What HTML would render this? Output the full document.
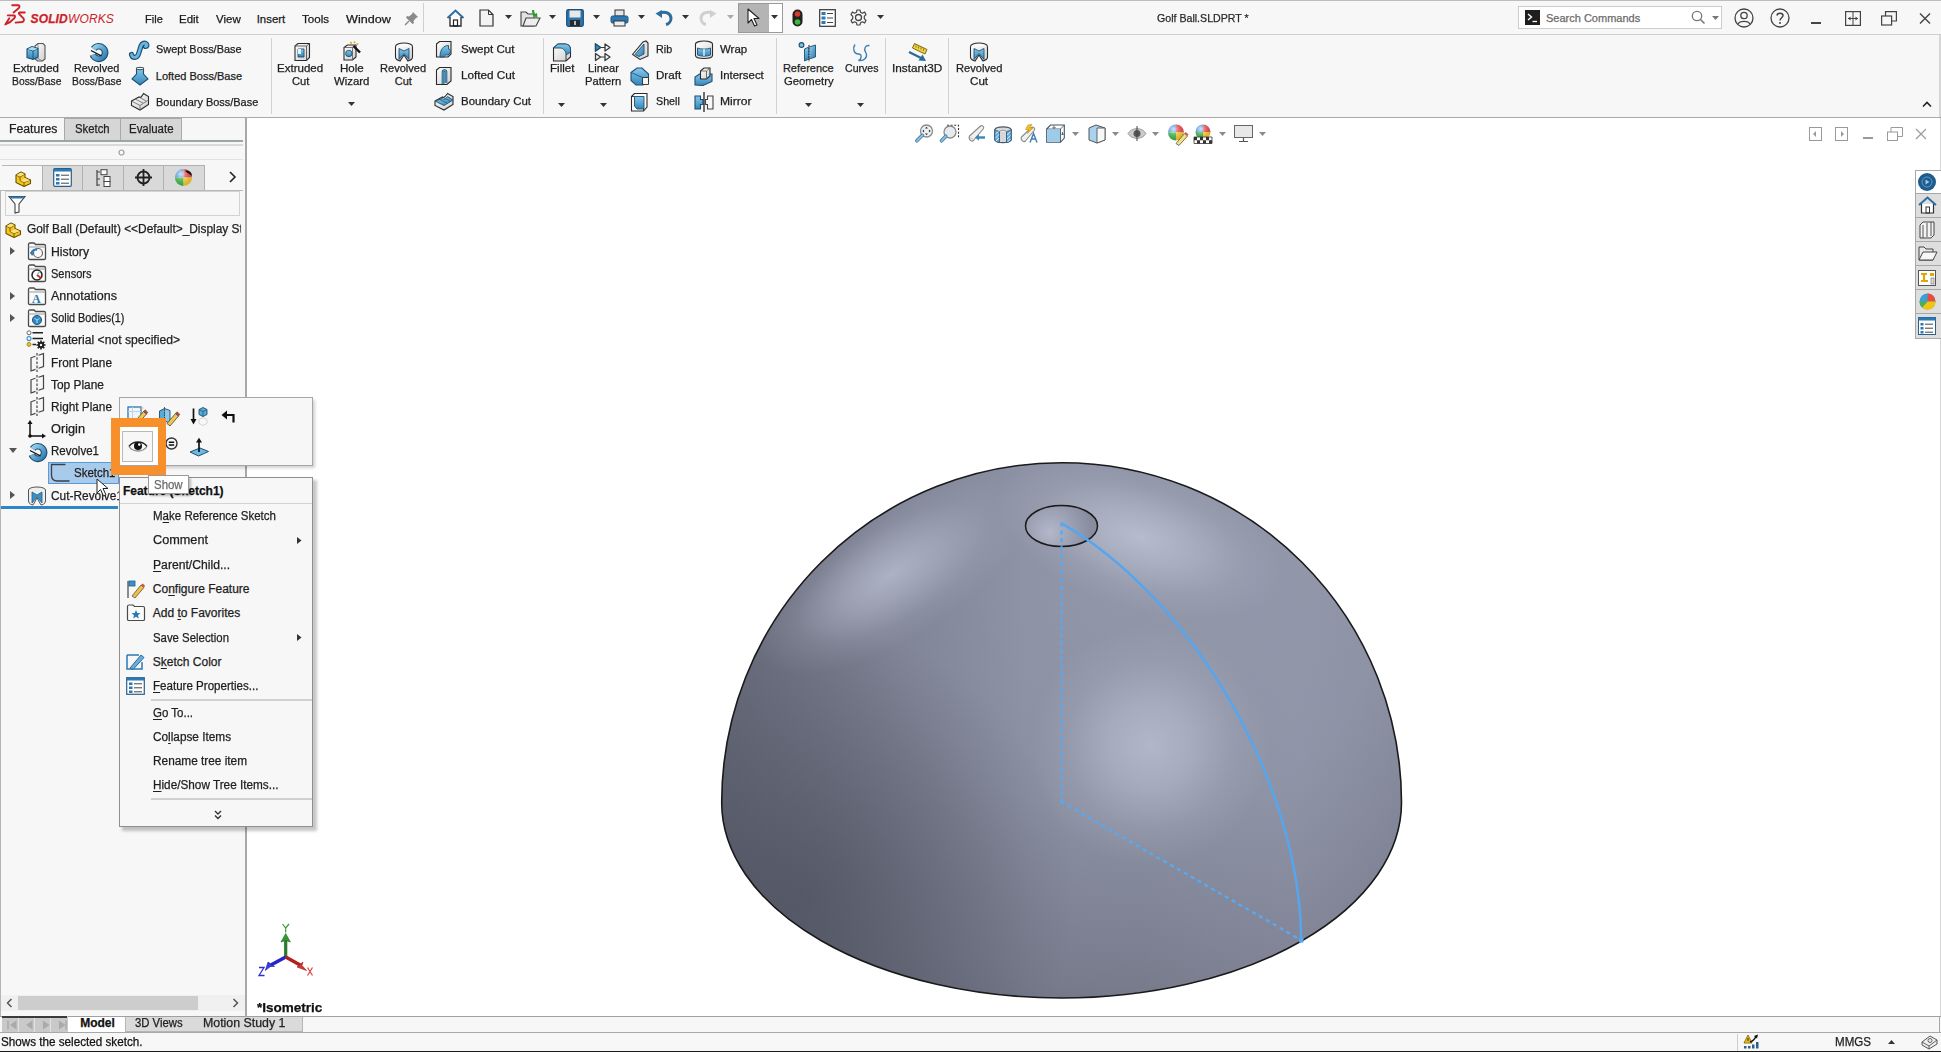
<!DOCTYPE html>
<html><head><meta charset="utf-8">
<style>
*{box-sizing:border-box;margin:0;padding:0}
html,body{width:1941px;height:1052px;overflow:hidden;background:#fff;font-family:"Liberation Sans",sans-serif;color:#1e1e1e}
.a{position:absolute}
.t{position:absolute;white-space:nowrap;line-height:1;-webkit-text-stroke:0.25px currentColor;transform-origin:0 0}
svg{position:absolute;overflow:visible}
</style></head><body>
<div class=a style='left:0px;top:0px;width:1941px;height:35px;background:#f7f7f7;'></div>
<div class=a style='left:0px;top:0px;width:1941px;height:1px;background:#bdbdbd;'></div>
<div class=a style='left:0px;top:34px;width:1941px;height:1px;background:#cfcfcf;'></div>
<div class=a style='left:0px;top:35px;width:1941px;height:82px;background:#f7f7f7;'></div>
<div class=a style='left:0px;top:117px;width:1941px;height:1px;background:#a9a9a9;'></div>
<div class=a style='left:1939px;top:35px;width:2px;height:82px;background:#d6d6d6;'></div>
<div class=a style='left:1940px;top:118px;width:1px;height:898px;background:#d6d6d6;'></div>
<svg style='left:0px;top:0px;' width='30' height='30' viewBox='0 0 30 30'><g fill='none' stroke='#cc2229' stroke-width='1.9' stroke-linecap='round' stroke-linejoin='round'><path d='M12.2 5.2 L18.3 5.3 C19.8 5.5 19.9 6.9 18.6 8.3 L13.6 12.4'/><path d='M7.8 15.4 L14.3 15.5 C15.4 15.7 15.3 16.9 14.1 18.4 C11.8 21.3 8.3 23.4 5.3 24.4 L9.3 18.2'/><path d='M24.8 12.5 L19.6 12.5 C18.6 12.6 18.6 13.3 19.3 14.1 L23.4 18.4 C24.4 19.5 24 21.4 22.4 22 L15.6 22.6'/></g></svg>
<div class=t style='left:30.5px;top:12.9px;font-size:12px;color:#cc2229;font-style:italic;letter-spacing:0.15px;transform:scaleX(1.0)'><b>SOLID</b><span style='-webkit-text-stroke:0'>WORKS</span></div>
<div class=t style='left:144.7px;top:13.55px;font-size:11.4px;color:#1b1b1b;transform:scaleX(0.969);'>File</div>
<div class=t style='left:179.0px;top:13.55px;font-size:11.4px;color:#1b1b1b;transform:scaleX(1.008);'>Edit</div>
<div class=t style='left:215.8px;top:13.55px;font-size:11.4px;color:#1b1b1b;transform:scaleX(1.008);'>View</div>
<div class=t style='left:256.7px;top:13.55px;font-size:11.4px;color:#1b1b1b;'>Insert</div>
<div class=t style='left:302.3px;top:13.55px;font-size:11.4px;color:#1b1b1b;transform:scaleX(1.018);'>Tools</div>
<div class=t style='left:345.6px;top:13.55px;font-size:11.4px;color:#1b1b1b;transform:scaleX(1.105);'>Window</div>
<svg style='left:404px;top:11px;' width='15' height='15' viewBox='0 0 15 15'><path d='M9 1 L14 6 L12 7 L9.5 10 L10 12 L8.5 13 L2 6.5 L3 5 L5 5.5 L8 3 Z' fill='#8a8a8a'/><path d='M5 10 L1 14' stroke='#8a8a8a' stroke-width='1.5'/></svg>
<div class=a style='left:423px;top:3px;width:1px;height:29px;background:#d0d0d0;'></div>
<svg style='left:446px;top:9px;' width='19' height='18' viewBox='0 0 19 18'><path d='M1.5 9 L9.5 1.5 L17.5 9' fill='none' stroke='#2b6fa3' stroke-width='2'/><path d='M4 8 V17 H15 V8' fill='#fff' stroke='#222' stroke-width='1.3'/><rect x='7.5' y='11' width='4' height='6' fill='none' stroke='#222' stroke-width='1.2'/></svg>
<svg style='left:479px;top:9px;' width='15' height='18' viewBox='0 0 15 18'><path d='M1 1 H9.5 L14 5.5 V17 H1 Z' fill='#f2f2f2' stroke='#333' stroke-width='1.2'/><path d='M9.5 1 V5.5 H14' fill='none' stroke='#333' stroke-width='1'/></svg>
<svg style='left:504.5px;top:15px' width='7' height='4' viewBox='0 0 7 4'><path d='M0 0H7L3.5 4Z' fill='#333'/></svg>
<svg style='left:520px;top:9px;' width='21' height='18' viewBox='0 0 21 18'><path d='M1 3 H6 L8 5 H14 V17 H1 Z' fill='#e2e2e2' stroke='#444' stroke-width='1.1'/><path d='M3 17 L6 9 H20 L16 17 Z' fill='#eee' stroke='#444' stroke-width='1.1'/><path d='M13 1 C13 4 14 6 16 7' fill='none' stroke='#2d9c2d' stroke-width='2.2'/><path d='M12.5 6 L17.5 9 L17 4 Z' fill='#2d9c2d'/></svg>
<svg style='left:548.9px;top:15px' width='7' height='4' viewBox='0 0 7 4'><path d='M0 0H7L3.5 4Z' fill='#333'/></svg>
<svg style='left:566px;top:9px;' width='18' height='18' viewBox='0 0 18 18'><rect x='0.7' y='0.7' width='16.6' height='16.6' rx='1.5' fill='#2b74ad' stroke='#1c4f78' stroke-width='1.2'/><rect x='3.5' y='1.5' width='11' height='7' fill='#e8e8e8'/><rect x='4' y='11' width='10' height='6' fill='#2a2a2a'/><rect x='8' y='12' width='2' height='4' fill='#bbb'/></svg>
<svg style='left:593.3px;top:15px' width='7' height='4' viewBox='0 0 7 4'><path d='M0 0H7L3.5 4Z' fill='#333'/></svg>
<svg style='left:610px;top:9px;' width='19' height='18' viewBox='0 0 19 18'><rect x='5' y='1' width='9' height='6' fill='#e6e6e6' stroke='#333' stroke-width='1'/><rect x='1' y='7' width='17' height='7' rx='1.5' fill='#2b78b3' stroke='#1f5a85' stroke-width='1'/><rect x='4' y='12' width='11' height='5' fill='#eee' stroke='#333' stroke-width='1'/></svg>
<svg style='left:637.7px;top:15px' width='7' height='4' viewBox='0 0 7 4'><path d='M0 0H7L3.5 4Z' fill='#333'/></svg>
<svg style='left:655px;top:10px;' width='17' height='16' viewBox='0 0 17 16'><path d='M5 3 C10 1 16 3 16 8.5 C16 12 13 14 11 14.5' fill='none' stroke='#2d6e9e' stroke-width='3'/><path d='M0.5 3.5 L7 0 L7 8 Z' fill='#2d6e9e'/></svg>
<svg style='left:682.3px;top:15px' width='7' height='4' viewBox='0 0 7 4'><path d='M0 0H7L3.5 4Z' fill='#333'/></svg>
<svg style='left:700px;top:10px;' width='17' height='16' viewBox='0 0 17 16'><path d='M12 3 C7 1 1 3 1 8.5 C1 12 4 14 6 14.5' fill='none' stroke='#cfcfcf' stroke-width='3'/><path d='M16.5 3.5 L10 0 L10 8 Z' fill='#cfcfcf'/></svg>
<svg style='left:726.7px;top:15px' width='7' height='4' viewBox='0 0 7 4'><path d='M0 0H7L3.5 4Z' fill='#aaa'/></svg>
<div class=a style='left:738px;top:3px;width:45px;height:30px;background:#ffffff;border:1px solid #9a9a9a'></div>
<div class=a style='left:739px;top:4px;width:30px;height:28px;background:#b4b4b4;'></div>
<svg style='left:747px;top:8px;' width='13' height='19' viewBox='0 0 13 19'><path d='M1 1 L1 15 L4.5 11.5 L7.5 18 L10 17 L7 10.5 L12 10.5 Z' fill='#fff' stroke='#222' stroke-width='1.1' stroke-linejoin='round'/></svg>
<svg style='left:771.1px;top:15px' width='7' height='4' viewBox='0 0 7 4'><path d='M0 0H7L3.5 4Z' fill='#333'/></svg>
<svg style='left:792px;top:9px;' width='11' height='18' viewBox='0 0 11 18'><rect x='0.5' y='0.5' width='10' height='17' rx='5' fill='#222'/><circle cx='5.5' cy='5' r='2.8' fill='#d83a2a'/><circle cx='5.5' cy='13' r='2.8' fill='#3cb83c'/></svg>
<svg style='left:819px;top:9px;' width='17' height='18' viewBox='0 0 17 18'><rect x='0.7' y='0.7' width='15.6' height='16.6' fill='#fff' stroke='#333' stroke-width='1.2'/><rect x='2.5' y='3' width='4' height='3' fill='#2b78b3'/><rect x='2.5' y='7.5' width='4' height='3' fill='#2b78b3'/><rect x='2.5' y='12' width='4' height='3' fill='#2b78b3'/><path d='M8 4.5H14M8 9H14M8 13.5H14' stroke='#444' stroke-width='1'/></svg>
<svg style='left:850px;top:9px;' width='17' height='17' viewBox='0 0 17 17'><circle cx='8.5' cy='8.5' r='3' fill='none' stroke='#444' stroke-width='1.3'/><path d='M7 1 H10 L10.5 3.2 L12.5 4.2 L14.6 3 L16 5.6 L14.3 7.2 V9.8 L16 11.4 L14.6 14 L12.5 12.8 L10.5 13.8 L10 16 H7 L6.5 13.8 L4.5 12.8 L2.4 14 L1 11.4 L2.7 9.8 V7.2 L1 5.6 L2.4 3 L4.5 4.2 L6.5 3.2 Z' fill='none' stroke='#444' stroke-width='1.2' stroke-linejoin='round'/></svg>
<svg style='left:876.5px;top:15px' width='7' height='4' viewBox='0 0 7 4'><path d='M0 0H7L3.5 4Z' fill='#333'/></svg>
<div class=t style='left:1157.2px;top:12.99px;font-size:11px;color:#2a2a2a;transform:scaleX(0.965);'>Golf Ball.SLDPRT *</div>
<div class=a style='left:1518px;top:6px;width:204px;height:23px;background:#ffffff;border:1px solid #cdcdcd'></div>
<svg style='left:1525px;top:10px;' width='15' height='15' viewBox='0 0 15 15'><rect width='15' height='15' fill='#1f1f1f'/><path d='M3 4 L6.5 7 L3 10' fill='none' stroke='#fff' stroke-width='1.4'/><path d='M7.5 11.5H12' stroke='#fff' stroke-width='1.3'/></svg>
<div class=t style='left:1546.0px;top:12.99px;font-size:11px;color:#6b6b6b;'>Search Commands</div>
<svg style='left:1691px;top:10px;' width='15' height='15' viewBox='0 0 15 15'><circle cx='6' cy='6' r='4.7' fill='none' stroke='#777' stroke-width='1.3'/><path d='M9.5 9.5 L13.5 13.5' stroke='#777' stroke-width='1.6'/></svg>
<svg style='left:1711.9px;top:15.5px' width='7' height='4' viewBox='0 0 7 4'><path d='M0 0H7L3.5 4Z' fill='#777'/></svg>
<svg style='left:1734px;top:8px;' width='20' height='20' viewBox='0 0 20 20'><circle cx='10' cy='10' r='9' fill='none' stroke='#444' stroke-width='1.3'/><circle cx='10' cy='7.5' r='3.2' fill='none' stroke='#444' stroke-width='1.3'/><path d='M4.2 16 C5.5 12.5 14.5 12.5 15.8 16' fill='none' stroke='#444' stroke-width='1.3'/></svg>
<svg style='left:1770px;top:8px;' width='20' height='20' viewBox='0 0 20 20'><circle cx='10' cy='10' r='9' fill='none' stroke='#444' stroke-width='1.3'/><path d='M7 7.5 C7 4.5 13 4.5 13 7.5 C13 9.5 10 10 10 12.5' fill='none' stroke='#444' stroke-width='1.5'/><circle cx='10' cy='15' r='1' fill='#444'/></svg>
<div class=a style='left:1811px;top:22px;width:10px;height:2px;background:#444;'></div>
<svg style='left:1845px;top:11px;' width='16' height='15' viewBox='0 0 16 15'><rect x='0.6' y='0.6' width='14.8' height='13.8' fill='none' stroke='#444' stroke-width='1.2'/><path d='M8 1V14M3 7.5H13' stroke='#444' stroke-width='1'/><path d='M3 7.5L5.5 5.5V9.5ZM13 7.5L10.5 5.5V9.5Z' fill='#444'/></svg>
<svg style='left:1881px;top:11px;' width='16' height='15' viewBox='0 0 16 15'><rect x='0.6' y='5' width='10' height='9' fill='none' stroke='#444' stroke-width='1.2'/><path d='M4.5 5V0.6H15.4V10H10.6' fill='none' stroke='#444' stroke-width='1.2'/></svg>
<svg style='left:1919px;top:13px;' width='12' height='11' viewBox='0 0 12 11'><path d='M1 0.5L11 10.5M11 0.5L1 10.5' stroke='#444' stroke-width='1.4'/></svg>
<svg style='left:1922px;top:101px;' width='10' height='6' viewBox='0 0 10 6'><path d='M1 5.5 L5 1.5 L9 5.5' fill='none' stroke='#222' stroke-width='1.6'/></svg>
<svg width='0' height='0' style='left:0;top:0'><defs>
<linearGradient id='gB' x1='0' y1='0' x2='0' y2='1'><stop offset='0' stop-color='#86c8ec'/><stop offset='1' stop-color='#3585b8'/></linearGradient>
<linearGradient id='gB2' x1='0' y1='0' x2='1' y2='1'><stop offset='0' stop-color='#9ad3f0'/><stop offset='1' stop-color='#2e7bb0'/></linearGradient>
<linearGradient id='gW' x1='0' y1='0' x2='1' y2='1'><stop offset='0' stop-color='#ffffff'/><stop offset='1' stop-color='#cfcfcf'/></linearGradient>
</defs></svg>
<div class=a style='left:271px;top:38px;width:1px;height:76px;background:#d2d2d2;'></div>
<div class=a style='left:542.6px;top:38px;width:1px;height:76px;background:#d2d2d2;'></div>
<div class=a style='left:775.8px;top:38px;width:1px;height:76px;background:#d2d2d2;'></div>
<div class=a style='left:885.3px;top:38px;width:1px;height:76px;background:#d2d2d2;'></div>
<div class=a style='left:948.4px;top:38px;width:1px;height:76px;background:#d2d2d2;'></div>
<svg style='left:26.4px;top:41.5px;' width='20' height='20' viewBox='0 0 20 20'><path d='M9 4 L12 1.5 H17 L19 3.5 V17 L16.5 19 H11.5 L9 17 Z' fill='url(#gW)' stroke='#555' stroke-width='1.1'/><path d='M12 1.5 V16.5 L9 17 M12 16.5 L16.5 19' fill='none' stroke='#777' stroke-width='0.8'/><path d='M1 7 L6 4.5 L12 6.5 V15 L7 17.5 L1 15.5 Z' fill='url(#gB)' stroke='#1d4f70' stroke-width='1.1'/><path d='M1 7 L7 9 L12 6.5 M7 9 V17.5' fill='none' stroke='#1d4f70' stroke-width='0.9'/><path d='M1.5 7.2 L6 5 L11.5 6.7 L7 8.6Z' fill='#a9dcf5'/></svg>
<div class=t style='left:13.2px;top:63.19px;font-size:11px;color:#1e1e1e;transform:scaleX(1.043);'>Extruded</div>
<div class=t style='left:11.8px;top:76.49px;font-size:11px;color:#1e1e1e;transform:scaleX(0.939);'>Boss/Base</div>
<svg style='left:88px;top:41.5px;' width='20' height='20' viewBox='0 0 20 20'><path d='M5.64 6.89 A6.3 6.3 0 1 1 4.88 12.65' fill='none' stroke='#1d4f70' stroke-width='6.6'/><path d='M5.64 6.89 A6.3 6.3 0 1 1 4.88 12.65' fill='none' stroke='url(#gB2)' stroke-width='4.4'/><path d='M3 8.5 L13.5 14' stroke='#111' stroke-width='1.4'/></svg>
<div class=t style='left:74.4px;top:63.19px;font-size:11px;color:#1e1e1e;transform:scaleX(0.986);'>Revolved</div>
<div class=t style='left:72.3px;top:76.49px;font-size:11px;color:#1e1e1e;transform:scaleX(0.939);'>Boss/Base</div>
<svg style='left:129.3px;top:39.5px;' width='20' height='20' viewBox='0 0 20 20'><path d='M2.5 14.5 C3.5 18.5 8 18.5 9.5 14 L12 6 C13 3 16 2.5 17.5 4 C18.5 5 18 6.5 16.5 6.5' fill='none' stroke='#1d4f70' stroke-width='5.2' stroke-linecap='round'/><path d='M2.5 14.5 C3.5 18.5 8 18.5 9.5 14 L12 6 C13 3 16 2.5 17.5 4 C18.5 5 18 6.5 16.5 6.5' fill='none' stroke='#6ab8e2' stroke-width='2.8' stroke-linecap='round'/></svg>
<div class=t style='left:155.8px;top:44.49px;font-size:11px;color:#1e1e1e;transform:scaleX(0.992);'>Swept Boss/Base</div>
<svg style='left:130px;top:65.5px;' width='20' height='20' viewBox='0 0 20 20'><path d='M6.5 2 H13.5 V8 L18 13 L10 19 L2 13 L6.5 8 Z' fill='url(#gB)' stroke='#1d4f70' stroke-width='1.1'/><ellipse cx='10' cy='2.5' rx='3.5' ry='1.2' fill='#f7f7f7' stroke='#2b2b2b' stroke-width='0.8'/></svg>
<div class=t style='left:155.8px;top:70.89px;font-size:11px;color:#1e1e1e;'>Lofted Boss/Base</div>
<svg style='left:129.5px;top:92px;' width='20' height='20' viewBox='0 0 20 20'><path d='M1.5 9 L9 5 C10.5 6.5 12 4 13.5 1.5 L18.5 4.5 V12.5 L10 18 L1.5 13.5 Z' fill='url(#gW)' stroke='#2b2b2b' stroke-width='1.1'/><path d='M1.5 9 L10 13.5 L18.5 8 M10 13.5 V18 M5 7 L13 11 M9 5 L16 9' fill='none' stroke='#666' stroke-width='0.8'/></svg>
<div class=t style='left:155.8px;top:96.69px;font-size:11px;color:#1e1e1e;transform:scaleX(0.995);'>Boundary Boss/Base</div>
<svg style='left:293px;top:41.5px;' width='20' height='20' viewBox='0 0 20 20'><path d='M2 4 L5 1.5 H16.5 V15.5 L13.5 18.5 H2 Z' fill='url(#gW)' stroke='#2b2b2b' stroke-width='1.1'/><path d='M2 4 H13.5 V18.5 M13.5 4 L16.5 1.5' fill='none' stroke='#555' stroke-width='0.9'/><path d='M5 7 H11 V15 H5Z' fill='url(#gB)' stroke='#1d4f70' stroke-width='0.9'/><path d='M5 7 H8 V12 H5' fill='#e8f4fb'/></svg>
<div class=t style='left:277.2px;top:63.19px;font-size:11px;color:#1e1e1e;transform:scaleX(1.049);'>Extruded</div>
<div class=t style='left:291.6px;top:76.49px;font-size:11px;color:#1e1e1e;transform:scaleX(1.016);'>Cut</div>
<svg style='left:342px;top:41px;' width='20' height='20' viewBox='0 0 20 20'><path d='M2 6.5 L5.5 4 H14 V16 L10.5 19 H2 Z' fill='url(#gW)' stroke='#2b2b2b' stroke-width='1.1'/><path d='M2 6.5 H10.5 V19 M10.5 6.5 L14 4' fill='none' stroke='#555' stroke-width='0.8'/><circle cx='6.8' cy='12.5' r='3.2' fill='url(#gB)' stroke='#1d4f70' stroke-width='0.9'/><path d='M11.5 5 L18 11.5' stroke='#111' stroke-width='2.4'/><circle cx='9' cy='1.8' r='1.1' fill='#e3a72a'/><circle cx='12.5' cy='1.2' r='1' fill='#e3a72a'/><circle cx='15.5' cy='3' r='0.9' fill='#e3a72a'/></svg>
<div class=t style='left:340.0px;top:63.19px;font-size:11px;color:#1e1e1e;transform:scaleX(1.052);'>Hole</div>
<div class=t style='left:334.2px;top:76.49px;font-size:11px;color:#1e1e1e;transform:scaleX(1.034);'>Wizard</div>
<svg style='left:348.0px;top:102px' width='7' height='4' viewBox='0 0 7 4'><path d='M0 0H7L3.5 4Z' fill='#333'/></svg>
<svg style='left:393.5px;top:41.5px;' width='20' height='20' viewBox='0 0 20 20'><ellipse cx='10' cy='4.5' rx='8.5' ry='3.5' fill='#fafafa' stroke='#2b2b2b' stroke-width='1.1'/><path d='M1.5 4.5 V15 C1.5 17.5 4 18.5 6 19 L10 13 L14 19 C16 18.5 18.5 17.5 18.5 15 V4.5' fill='url(#gW)' stroke='#2b2b2b' stroke-width='1.1'/><path d='M5 6.5 V17.5 L10 11.5 L15 17.5 V6.5 L10 9 Z' fill='url(#gB)' stroke='#1d4f70' stroke-width='0.9'/></svg>
<div class=t style='left:380.4px;top:63.19px;font-size:11px;color:#1e1e1e;transform:scaleX(1.007);'>Revolved</div>
<div class=t style='left:394.8px;top:76.49px;font-size:11px;color:#1e1e1e;'>Cut</div>
<svg style='left:435.2px;top:40px;' width='20' height='20' viewBox='0 0 20 20'><path d='M1.5 4 L4.5 1.5 H16 V14 L13 17 H1.5 Z' fill='url(#gW)' stroke='#2b2b2b' stroke-width='1.1'/><path d='M5 17 C5 10 8 5.5 13.5 5.5 V9 C15.5 9 16 11 15 13 L13 15 C11 14.5 9.5 15.5 9 17 Z' fill='url(#gB)' stroke='#1d4f70' stroke-width='0.9'/></svg>
<div class=t style='left:460.5px;top:44.49px;font-size:11px;color:#1e1e1e;transform:scaleX(1.052);'>Swept Cut</div>
<svg style='left:435.2px;top:66px;' width='20' height='20' viewBox='0 0 20 20'><path d='M1.5 4 L4.5 1.5 H16 V15 L12 18.5 H1.5 Z' fill='url(#gW)' stroke='#2b2b2b' stroke-width='1.1'/><path d='M8 18 V6 C8 4 11 4 11 6 V17' fill='none' stroke='#1d4f70' stroke-width='2.6'/><path d='M8 18 V6 C8 4 11 4 11 6 V17' fill='none' stroke='#5aaad8' stroke-width='1.2'/></svg>
<div class=t style='left:460.5px;top:70.39px;font-size:11px;color:#1e1e1e;transform:scaleX(1.066);'>Lofted Cut</div>
<svg style='left:434px;top:92px;' width='20' height='20' viewBox='0 0 20 20'><path d='M1 9 L8.5 5 C10 6.5 12 3.5 13.5 1.5 L19 4.5 V12.5 L10 18 L1 13.5 Z' fill='url(#gW)' stroke='#2b2b2b' stroke-width='1.1'/><path d='M1 9 L10 13.5 L19 8 L13.5 4.5 C12 6.5 10 8.5 8.5 6.5 Z' fill='url(#gB2)' stroke='#1d4f70' stroke-width='0.9'/><path d='M5 7 L13 11 M9 5.5 L16 9' stroke='#1d4f70' stroke-width='0.7'/></svg>
<div class=t style='left:460.5px;top:96.39px;font-size:11px;color:#1e1e1e;transform:scaleX(1.041);'>Boundary Cut</div>
<svg style='left:551.6px;top:42px;' width='20' height='20' viewBox='0 0 20 20'><path d='M1.5 6 L6 2 H13 C16.5 2 18.5 4.5 18.5 8 V15 L14 19 H1.5 Z' fill='url(#gW)' stroke='#2b2b2b' stroke-width='1.1'/><path d='M6 2 H13 C16.5 2 18.5 4.5 18.5 8 V10 L14 13 C14 9.5 12 6 8 6 H1.5 Z' fill='url(#gB)' stroke='#1d4f70' stroke-width='0.9'/><path d='M14 13 V19' stroke='#2b2b2b' stroke-width='0.9'/></svg>
<div class=t style='left:549.7px;top:63.09px;font-size:11px;color:#1e1e1e;transform:scaleX(1.051);'>Fillet</div>
<svg style='left:557.8px;top:102.5px' width='7' height='4' viewBox='0 0 7 4'><path d='M0 0H7L3.5 4Z' fill='#333'/></svg>
<svg style='left:594px;top:43px;' width='20' height='20' viewBox='0 0 20 20'><path d='M1.5 1 V8 L6.5 4.5 Z M11 1 V8 L16 4.5 Z M1.5 10.5 V17.5 L6.5 14 Z M11 10.5 V17.5 L16 14 Z' fill='none' stroke='#3a3a3a' stroke-width='1.3' stroke-linejoin='round'/><path d='M1.5 1 V8 L6.5 4.5 Z' fill='#3d8fc4' stroke='#1d4f70' stroke-width='1.3'/><path d='M6.5 4.5 H11 M6.5 14 H11' stroke='#3a3a3a' stroke-width='1'/></svg>
<div class=t style='left:587.7px;top:63.09px;font-size:11px;color:#1e1e1e;transform:scaleX(1.011);'>Linear</div>
<div class=t style='left:585.0px;top:76.49px;font-size:11px;color:#1e1e1e;transform:scaleX(1.018);'>Pattern</div>
<svg style='left:599.6px;top:102.5px' width='7' height='4' viewBox='0 0 7 4'><path d='M0 0H7L3.5 4Z' fill='#333'/></svg>
<svg style='left:630.8px;top:40px;' width='20' height='20' viewBox='0 0 20 20'><path d='M1.5 14.5 L12 2 L15 1 L17 3 V16 L9 19.5 Z' fill='url(#gW)' stroke='#2b2b2b' stroke-width='1.1'/><path d='M4 14.5 L13 4 V14 L8 16.5 Z' fill='url(#gB2)' stroke='#1d4f70' stroke-width='0.9'/></svg>
<div class=t style='left:655.9px;top:44.39px;font-size:11px;color:#1e1e1e;transform:scaleX(0.975);'>Rib</div>
<svg style='left:630px;top:66px;' width='20' height='20' viewBox='0 0 20 20'><path d='M1 6.5 L7 2 H12 L18.5 8 V15.5 L13 19 H6 L1 14.5 Z' fill='url(#gB)' stroke='#1d4f70' stroke-width='1.1'/><path d='M12.5 11.5 H18.5 V18.5 H12.5Z' fill='#f6f6f6' stroke='#2b2b2b' stroke-width='0.9'/><path d='M1 6.5 L12.5 11.5' stroke='#1d4f70' stroke-width='0.8'/></svg>
<div class=t style='left:655.9px;top:70.09px;font-size:11px;color:#1e1e1e;transform:scaleX(1.053);'>Draft</div>
<svg style='left:630px;top:92px;' width='20' height='20' viewBox='0 0 20 20'><path d='M1.5 4.5 L4.5 1.5 H17 V15 L13.5 19 H1.5 Z' fill='#fff' stroke='#2b2b2b' stroke-width='1.1'/><path d='M4.5 4.5 H14 V17 H7 L4.5 14 Z' fill='url(#gB)' stroke='#1d4f70' stroke-width='0.9'/><path d='M1.5 4.5 H4.5 M13.5 19 V17' stroke='#2b2b2b' stroke-width='0.9'/></svg>
<div class=t style='left:655.9px;top:96.49px;font-size:11px;color:#1e1e1e;transform:scaleX(0.973);'>Shell</div>
<svg style='left:694px;top:40px;' width='20' height='20' viewBox='0 0 20 20'><ellipse cx='10' cy='4' rx='8.5' ry='3' fill='#f2f2f2' stroke='#2b2b2b' stroke-width='1.1'/><path d='M1.5 4 V15.5 C1.5 19.5 18.5 19.5 18.5 15.5 V4' fill='url(#gW)' stroke='#2b2b2b' stroke-width='1.1'/><path d='M3.5 8 C7 9.5 13 9.5 16.5 8 V15 C13 16.5 7 16.5 3.5 15Z' fill='url(#gB)' stroke='#1d4f70' stroke-width='0.9'/><path d='M10 9 V16' stroke='#fff' stroke-width='1.2'/></svg>
<div class=t style='left:720.3px;top:44.39px;font-size:11px;color:#1e1e1e;transform:scaleX(1.039);'>Wrap</div>
<svg style='left:694px;top:66px;' width='20' height='20' viewBox='0 0 20 20'><path d='M1 19 V11 L5.5 8 H18 V15.5 L9 19.5 Z' fill='url(#gB)' stroke='#1d4f70' stroke-width='1.1'/><path d='M6.5 5 L10 2 H16 V10 L12.5 13 H6.5 Z' fill='url(#gW)' stroke='#2b2b2b' stroke-width='1.1'/><path d='M6.5 5 H12.5 V13 M12.5 5 L16 2' fill='none' stroke='#555' stroke-width='0.8'/></svg>
<div class=t style='left:720.3px;top:70.09px;font-size:11px;color:#1e1e1e;transform:scaleX(1.038);'>Intersect</div>
<svg style='left:694px;top:92px;' width='20' height='20' viewBox='0 0 20 20'><path d='M1 4 H6.5 V7.5 H9 V12.5 H6.5 V17 H1 Z' fill='url(#gB)' stroke='#1d4f70' stroke-width='1.1'/><path d='M19 4 H13.5 V7.5 H11.5 V12.5 H13.5 V17 H19 Z' fill='none' stroke='#444' stroke-width='1.1'/><path d='M10 0 V20' stroke='#222' stroke-width='1.3'/></svg>
<div class=t style='left:720.3px;top:96.49px;font-size:11px;color:#1e1e1e;transform:scaleX(1.1);'>Mirror</div>
<svg style='left:798.3px;top:42px;' width='20' height='20' viewBox='0 0 20 20'><circle cx='3.5' cy='3' r='2.4' fill='#7cc0e6' stroke='#1d4f70' stroke-width='1.1'/><path d='M6.5 7 L11 5 V17 L6.5 19 Z' fill='url(#gB)' stroke='#1d4f70' stroke-width='0.9'/><path d='M11 5 L17.5 3 V15 L11 17' fill='url(#gB2)' stroke='#1d4f70' stroke-width='0.9'/><path d='M11 3 V20' stroke='#222' stroke-width='1.1' stroke-dasharray='1.6 1.2'/></svg>
<div class=t style='left:782.9px;top:63.09px;font-size:11px;color:#1e1e1e;'>Reference</div>
<div class=t style='left:783.5px;top:76.49px;font-size:11px;color:#1e1e1e;transform:scaleX(1.027);'>Geometry</div>
<svg style='left:804.5px;top:102.5px' width='7' height='4' viewBox='0 0 7 4'><path d='M0 0H7L3.5 4Z' fill='#333'/></svg>
<svg style='left:852.4px;top:42px;' width='20' height='20' viewBox='0 0 20 20'><path d='M3 2.5 C0.5 6 1.5 12 6.5 12 C10.5 12 9.5 17.5 6.5 18.5 C12 19.5 16.5 15 13.5 10 C11.5 6.5 13.5 3 17.5 3.5' fill='none' stroke='#3d7fae' stroke-width='1.4'/></svg>
<div class=t style='left:844.7px;top:63.09px;font-size:11px;color:#1e1e1e;transform:scaleX(0.961);'>Curves</div>
<svg style='left:857.3px;top:102.5px' width='7' height='4' viewBox='0 0 7 4'><path d='M0 0H7L3.5 4Z' fill='#333'/></svg>
<svg style='left:907.8px;top:42px;' width='20' height='20' viewBox='0 0 20 20'><path d='M6.5 1.5 L19 7.5 L17 12 L4.5 6 Z' fill='#f3d23a' stroke='#6a5a10' stroke-width='0.9'/><path d='M8 3.5 V5.5 M10.5 4.5 V6.5 M13 5.5 V7.5 M15.5 6.8 V8.8' stroke='#6a5a10' stroke-width='0.8'/><path d='M1 10 L13 16' stroke='#2a6a9a' stroke-width='2.2'/><path d='M10.5 18.5 L18 19 L14.5 12.5 Z' fill='#2a6a9a'/></svg>
<div class=t style='left:891.7px;top:63.09px;font-size:11px;color:#1e1e1e;transform:scaleX(1.068);'>Instant3D</div>
<svg style='left:968.5px;top:41.5px;' width='20' height='20' viewBox='0 0 20 20'><ellipse cx='10' cy='4.5' rx='8.5' ry='3.5' fill='#fafafa' stroke='#2b2b2b' stroke-width='1.1'/><path d='M1.5 4.5 V15 C1.5 17.5 4 18.5 6 19 L10 13 L14 19 C16 18.5 18.5 17.5 18.5 15 V4.5' fill='url(#gW)' stroke='#2b2b2b' stroke-width='1.1'/><path d='M5 6.5 V17.5 L10 11.5 L15 17.5 V6.5 L10 9 Z' fill='url(#gB)' stroke='#1d4f70' stroke-width='0.9'/></svg>
<div class=t style='left:955.5px;top:63.09px;font-size:11px;color:#1e1e1e;transform:scaleX(1.01);'>Revolved</div>
<div class=t style='left:969.6px;top:76.49px;font-size:11px;color:#1e1e1e;transform:scaleX(1.057);'>Cut</div>
<svg width="1941" height="1052" style="left:0;top:0">
<defs>
<radialGradient id="gbase" cx="1130" cy="590" r="600" gradientUnits="userSpaceOnUse" gradientTransform="translate(1130 590) scale(1.05 0.95) translate(-1130 -590)">
<stop offset="0" stop-color="#9196a9"/><stop offset="0.4" stop-color="#8a8fa2"/><stop offset="0.7" stop-color="#777b8c"/><stop offset="0.9" stop-color="#636676"/><stop offset="1" stop-color="#5a5d6b"/></radialGradient>
<radialGradient id="dk" cx="805" cy="895" r="270" gradientUnits="userSpaceOnUse"><stop offset="0" stop-color="#4a4d5a" stop-opacity="0.6"/><stop offset="0.5" stop-color="#4a4d5a" stop-opacity="0.3"/><stop offset="1" stop-color="#4a4d5a" stop-opacity="0"/></radialGradient>
<radialGradient id="h1" cx="1150" cy="745" r="120" gradientUnits="userSpaceOnUse"><stop offset="0" stop-color="#b4b8cb" stop-opacity="0.95"/><stop offset="0.35" stop-color="#b4b8cb" stop-opacity="0.65"/><stop offset="0.7" stop-color="#b4b8cb" stop-opacity="0.2"/><stop offset="1" stop-color="#b4b8cb" stop-opacity="0"/></radialGradient>
<radialGradient id="h2" cx="892" cy="574" r="120" gradientUnits="userSpaceOnUse" gradientTransform="translate(892 574) rotate(-32) scale(1.3 0.55) translate(-892 -574)"><stop offset="0" stop-color="#b0b4c7" stop-opacity="0.95"/><stop offset="0.35" stop-color="#b0b4c7" stop-opacity="0.6"/><stop offset="0.7" stop-color="#b0b4c7" stop-opacity="0.18"/><stop offset="1" stop-color="#b0b4c7" stop-opacity="0"/></radialGradient>
<radialGradient id="h3" cx="1140" cy="537" r="120" gradientUnits="userSpaceOnUse" gradientTransform="translate(1140 537) rotate(18) scale(1.25 0.6) translate(-1140 -537)"><stop offset="0" stop-color="#b9bdd0" stop-opacity="0.95"/><stop offset="0.35" stop-color="#b9bdd0" stop-opacity="0.6"/><stop offset="0.7" stop-color="#b9bdd0" stop-opacity="0.18"/><stop offset="1" stop-color="#b9bdd0" stop-opacity="0"/></radialGradient>
<linearGradient id="lr" x1="722" y1="0" x2="1400" y2="0" gradientUnits="userSpaceOnUse"><stop offset="0" stop-color="#4a4d5a" stop-opacity="0.42"/><stop offset="0.2" stop-color="#4a4d5a" stop-opacity="0.22"/><stop offset="0.45" stop-color="#4a4d5a" stop-opacity="0"/><stop offset="0.62" stop-color="#a4a8bc" stop-opacity="0"/><stop offset="0.85" stop-color="#a4a8bc" stop-opacity="0.22"/><stop offset="1" stop-color="#a4a8bc" stop-opacity="0.1"/></linearGradient>
<radialGradient id="hole" cx="1050" cy="532" r="42" gradientUnits="userSpaceOnUse"><stop offset="0" stop-color="#b3b7ca"/><stop offset="1" stop-color="#878c9f"/></radialGradient>
<clipPath id="dc"><path d="M721.7 802.6 A339.9 339.9 0 0 1 1401.5 802.6 A339.9 195.4 0 0 1 721.7 802.6 Z"/></clipPath>
</defs>
<g clip-path="url(#dc)">
<rect x="700" y="440" width="720" height="580" fill="url(#gbase)"/>
<rect x="700" y="440" width="720" height="580" fill="url(#lr)"/>
<rect x="700" y="440" width="720" height="580" fill="url(#dk)"/>
<rect x="700" y="440" width="720" height="580" fill="url(#h1)"/>
<rect x="700" y="440" width="720" height="580" fill="url(#h2)"/>
<rect x="700" y="440" width="720" height="580" fill="url(#h3)"/>
</g>
<ellipse cx="1061.5" cy="526" rx="36" ry="20.5" fill="url(#hole)" stroke="#1a1a1a" stroke-width="1.5"/>
<path d="M721.7 802.6 A339.9 339.9 0 0 1 1401.5 802.6 A339.9 195.4 0 0 1 721.7 802.6 Z" fill="none" stroke="#1a1a1a" stroke-width="1.6"/>
<path d="M1301.0 940.1 L1300.9 932.7 L1300.7 925.3 L1300.3 917.8 L1299.7 910.2 L1299.0 902.5 L1298.1 894.7 L1297.0 886.9 L1295.8 879.0 L1294.4 871.1 L1292.8 863.1 L1291.1 855.1 L1289.3 847.1 L1287.3 839.0 L1285.1 830.9 L1282.8 822.7 L1280.3 814.6 L1277.7 806.5 L1274.9 798.3 L1272.0 790.2 L1268.9 782.0 L1265.7 773.9 L1262.4 765.8 L1258.9 757.7 L1255.3 749.7 L1251.5 741.7 L1247.6 733.7 L1243.6 725.8 L1239.5 717.9 L1235.2 710.1 L1230.9 702.3 L1226.4 694.7 L1221.8 687.0 L1217.0 679.5 L1212.2 672.1 L1207.3 664.7 L1202.3 657.5 L1197.2 650.3 L1191.9 643.2 L1186.6 636.3 L1181.2 629.5 L1175.8 622.8 L1170.2 616.2 L1164.6 609.7 L1158.9 603.4 L1153.2 597.2 L1147.3 591.1 L1141.4 585.2 L1135.5 579.5 L1129.5 573.9 L1123.5 568.4 L1117.4 563.1 L1111.3 558.0 L1105.1 553.0 L1099.0 548.2 L1092.8 543.6 L1086.5 539.2 L1080.3 534.9 L1074.0 530.9 L1067.8 527.0 L1061.5 523.3" fill="none" stroke="#55a6ef" stroke-width="2.5"/>
<line x1="1061.5" y1="523.5" x2="1061.5" y2="802" stroke="#59a8f0" stroke-width="2.5" stroke-dasharray="2 5.9" stroke-linecap="round"/>
<line x1="1061.5" y1="802" x2="1301" y2="940" stroke="#59a8f0" stroke-width="2.5" stroke-dasharray="2 5.9" stroke-linecap="round"/>
<rect x="1299" y="938" width="4.5" height="4.5" fill="#55a6ef"/>
</svg>
<svg style='left:915px;top:124px;' width='19' height='19' viewBox='0 0 19 19'><circle cx='11.5' cy='7' r='6' fill='#eef2f5' stroke='#8a8a8a' stroke-width='1.3'/><path d='M11.5 2.8 L10 4.6 H13Z M11.5 11.2 L10 9.4 H13Z M7.3 7 L9.1 5.5 V8.5Z M15.7 7 L13.9 5.5 V8.5Z' fill='#333'/><path d='M7.3 11.3 L1.8 16.8' stroke='#4a7fa5' stroke-width='3.6' stroke-linecap='round'/><path d='M7.3 11.3 L1.8 16.8' stroke='#8cc3e6' stroke-width='1.8' stroke-linecap='round'/></svg>
<svg style='left:940px;top:124px;' width='20' height='19' viewBox='0 0 20 19'><path d='M7 1.2 H18.5 V13.5' fill='none' stroke='#333' stroke-width='1.1' stroke-dasharray='2 1.6'/><circle cx='10' cy='8' r='6' fill='#e6ebef' stroke='#8a8a8a' stroke-width='1.3'/><path d='M5.8 12.2 L1.5 16.8' stroke='#4a7fa5' stroke-width='3.6' stroke-linecap='round'/><path d='M5.8 12.2 L1.5 16.8' stroke='#8cc3e6' stroke-width='1.8' stroke-linecap='round'/></svg>
<svg style='left:967px;top:124px;' width='19' height='19' viewBox='0 0 19 19'><path d='M2.5 12 L13.5 2 C15 1 17.5 2.5 16.5 4.5 L6.5 16.5 C5 18 1 16 2.5 12Z' fill='#f0f0f0' stroke='#8a8a8a' stroke-width='1.1'/><path d='M4 13.5 L6 15.5' stroke='#aaa' stroke-width='1'/><path d='M9.5 13.5 H18' stroke='#3d86b8' stroke-width='2.4'/><path d='M8 13.5 L12 10.3 V16.7Z' fill='#3d86b8'/></svg>
<svg style='left:994px;top:125px;' width='18' height='18' viewBox='0 0 18 18'><path d='M0.8 4.5 C3 1 15 1 17.2 4.5 V15 C15 18.5 3 18.5 0.8 15Z' fill='#d6d9dc' stroke='#4a5560' stroke-width='1.1'/><path d='M0.8 4.5 V15 C1.5 16.5 3.5 17.3 5.5 17.5 V6.5 C3.5 6.2 1.5 5.5 0.8 4.5Z M17.2 4.5 V15 C16.5 16.5 14.5 17.3 12.5 17.5 V6.5 C14.5 6.2 16.5 5.5 17.2 4.5Z' fill='#6aaad6' stroke='#2a5a80' stroke-width='0.9'/><path d='M1.5 9 L4.5 6.5 M1.5 13 L5 9.5 M2 16 L5 13 M13 10 L16.5 7 M13 14 L16.5 10.5 M13.5 17 L16.5 14' stroke='#e8f4fb' stroke-width='0.9'/><path d='M5.5 6.5 C7 5 11 5 12.5 6.5' fill='#fff' stroke='#888' stroke-width='0.8'/></svg>
<svg style='left:1019px;top:124px;' width='20' height='19' viewBox='0 0 20 19'><path d='M2.5 13 L12.5 3.5 C14 2.5 16.5 4 15.5 6 L6.5 17 C5 18.5 1 16.5 2.5 13Z' fill='#f0f0f0' stroke='#8a8a8a' stroke-width='1.1'/><path d='M9 1 L13 0.5 L10.5 4 L14 4 L8.5 9.5 L10 5.5 L6.5 5.5Z' fill='#f3c422' stroke='#c08a10' stroke-width='0.6'/><path d='M11 18.5 L14.5 9.5 L18 18.5 M12.3 15 H16.7' fill='none' stroke='#3a7fb0' stroke-width='1.4'/></svg>
<svg style='left:1046px;top:124px;' width='19' height='19' viewBox='0 0 19 19'><path d='M0.7 5 L4.5 1 H18.3 V14 L14.5 18.3 H0.7Z' fill='#fff' stroke='#3f5866' stroke-width='1.1'/><path d='M0.7 5 H14.5 V18.3 M14.5 5 L18.3 1' fill='none' stroke='#3f5866' stroke-width='0.9'/><rect x='1.2' y='5.5' width='12.8' height='12.3' fill='#9dcbea'/><path d='M8 1.5 V4.3 M6.5 3 L8 4.5 L9.5 3 M16.5 8 V11 M15 9.5 L16.5 11 L18 9.5' fill='none' stroke='#444' stroke-width='0.8'/></svg>
<svg style='left:1071.8px;top:131.5px' width='7' height='4' viewBox='0 0 7 4'><path d='M0 0H7L3.5 4Z' fill='#8a8a8a'/></svg>
<svg style='left:1088px;top:124px;' width='18' height='19' viewBox='0 0 18 19'><path d='M1 4 L8 1 L17 4 V16 L9 19 L1 16 Z' fill='#a9d2ee' stroke='#555' stroke-width='1'/><path d='M9 4 V19 L17 16 V4 Z' fill='#f7f7f7' stroke='#555' stroke-width='0.9'/></svg>
<svg style='left:1112.0px;top:131.5px' width='7' height='4' viewBox='0 0 7 4'><path d='M0 0H7L3.5 4Z' fill='#8a8a8a'/></svg>
<svg style='left:1127px;top:126px;' width='20' height='15' viewBox='0 0 20 15'><path d='M1 7.5 C5 1 15 1 19 7.5 C15 14 5 14 1 7.5Z' fill='#ccc' stroke='#999' stroke-width='1'/><circle cx='10' cy='7.5' r='3.5' fill='#555'/><path d='M10 0 V15' stroke='#444' stroke-width='1'/></svg>
<svg style='left:1152.2px;top:131.5px' width='7' height='4' viewBox='0 0 7 4'><path d='M0 0H7L3.5 4Z' fill='#8a8a8a'/></svg>
<svg width='0' height='0' style='left:0;top:0'><defs><radialGradient id='gloss' cx='0.35' cy='0.3' r='0.7'><stop offset='0' stop-color='#fff' stop-opacity='0.75'/><stop offset='0.5' stop-color='#fff' stop-opacity='0.15'/><stop offset='1' stop-color='#000' stop-opacity='0.1'/></radialGradient></defs></svg>
<svg style='left:1167px;top:124px;' width='21' height='20' viewBox='0 0 21 20'><path d='M9 8.5 V0.5 A8 8 0 0 0 1 8.5Z' fill='#4a90d9'/><path d='M9 8.5 V0.5 A8 8 0 0 1 17 8.5Z' fill='#e04848'/><path d='M9 8.5 H1 A8 8 0 0 0 9 16.5Z' fill='#3fae49'/><path d='M9 8.5 H17 A8 8 0 0 1 9 16.5Z' fill='#f2c531'/><circle cx='9' cy='8.5' r='8' fill='url(#gloss)'/><path d='M9 19.5 L17.5 9.5 L20.5 12 L12 21.5 Z' fill='#f4e27a' stroke='#555' stroke-width='0.8'/><path d='M17.5 9.5 L20.5 12 L21.5 10.5 L18.8 8Z' fill='#d9534f'/></svg>
<svg style='left:1193px;top:124px;' width='20' height='20' viewBox='0 0 20 20'><path d='M10 8 V0.5 A7.5 7.5 0 0 0 2.5 8Z' fill='#4a90d9'/><path d='M10 8 V0.5 A7.5 7.5 0 0 1 17.5 8Z' fill='#e04848'/><path d='M10 8 H2.5 A7.5 7.5 0 0 0 10 15.5Z' fill='#3fae49'/><path d='M10 8 H17.5 A7.5 7.5 0 0 1 10 15.5Z' fill='#f2c531'/><circle cx='10' cy='8' r='7.5' fill='url(#gloss)'/><path d='M1 13 H19 V19.5 H1 Z' fill='#fff' stroke='#333' stroke-width='0.8'/><path d='M1 13 H4 V16.2 H1Z M7 13 H10 V16.2 H7Z M13 13 H16 V16.2 H13Z M4 16.2 H7 V19.5 H4Z M10 16.2 H13 V19.5 H10Z M16 16.2 H19 V19.5 H16Z' fill='#333'/></svg>
<svg style='left:1219.2px;top:131.5px' width='7' height='4' viewBox='0 0 7 4'><path d='M0 0H7L3.5 4Z' fill='#8a8a8a'/></svg>
<svg style='left:1234px;top:125px;' width='19' height='17' viewBox='0 0 19 17'><rect x='0.5' y='0.5' width='18' height='12' fill='#e8e8e8' stroke='#666' stroke-width='1'/><path d='M9.5 13 V16 M5 16.5 H14' stroke='#555' stroke-width='1.2'/></svg>
<svg style='left:1259.4px;top:131.5px' width='7' height='4' viewBox='0 0 7 4'><path d='M0 0H7L3.5 4Z' fill='#8a8a8a'/></svg>
<svg style='left:1809px;top:127px;' width='13' height='14' viewBox='0 0 13 14'><rect x='0.5' y='0.5' width='12' height='13' fill='none' stroke='#9a9a9a'/><path d='M7 4 L4 7 L7 10Z' fill='#9a9a9a'/></svg>
<svg style='left:1835px;top:127px;' width='13' height='14' viewBox='0 0 13 14'><rect x='0.5' y='0.5' width='12' height='13' fill='none' stroke='#9a9a9a'/><path d='M6 4 L9 7 L6 10Z' fill='#9a9a9a'/></svg>
<div class=a style='left:1863px;top:137px;width:10px;height:1.5px;background:#9a9a9a;'></div>
<svg style='left:1887px;top:127px;' width='16' height='14' viewBox='0 0 16 14'><rect x='0.5' y='5' width='10' height='8.5' fill='none' stroke='#9a9a9a'/><path d='M4 5 V0.5 H15.5 V9.5 H10.5' fill='none' stroke='#9a9a9a'/></svg>
<svg style='left:1915px;top:128px;' width='12' height='12' viewBox='0 0 12 12'><path d='M1 1 L11 11 M11 1 L1 11' stroke='#9a9a9a' stroke-width='1.2'/></svg>
<div class=a style='left:1915px;top:170px;width:26px;height:24px;background:#ffffff;border:1px solid #a8a8a8;border-right:none'></div>
<div class=a style='left:1915px;top:193px;width:26px;height:25px;background:#dedede;border:1px solid #a8a8a8;border-right:none'></div>
<div class=a style='left:1915px;top:217px;width:26px;height:25px;background:#dedede;border:1px solid #a8a8a8;border-right:none'></div>
<div class=a style='left:1915px;top:241px;width:26px;height:25px;background:#dedede;border:1px solid #a8a8a8;border-right:none'></div>
<div class=a style='left:1915px;top:265px;width:26px;height:25px;background:#dedede;border:1px solid #a8a8a8;border-right:none'></div>
<div class=a style='left:1915px;top:289px;width:26px;height:25px;background:#dedede;border:1px solid #a8a8a8;border-right:none'></div>
<div class=a style='left:1915px;top:313px;width:26px;height:26px;background:#dedede;border:1px solid #a8a8a8;border-right:none'></div>
<svg style='left:1917px;top:172px;' width='20' height='20' viewBox='0 0 20 20'><circle cx='10' cy='10' r='9' fill='#1f5c8e'/><circle cx='10' cy='10' r='5' fill='none' stroke='#6fa8d6' stroke-width='0.8'/><path d='M8.5 7.5 L12.5 10 L8.5 12.5Z' fill='#9cc8ec'/></svg>
<svg style='left:1918px;top:196px;' width='19' height='18' viewBox='0 0 19 18'><path d='M1 9 L9.5 1.5 L18 9' fill='none' stroke='#2b6fa3' stroke-width='2'/><path d='M3.5 8 V17 H15.5 V8' fill='#fff' stroke='#333' stroke-width='1.2'/><rect x='8' y='11' width='3.5' height='6' fill='none' stroke='#333' stroke-width='1'/></svg>
<svg style='left:1919px;top:220px;' width='17' height='19' viewBox='0 0 17 19'><path d='M1 5 L4 2 H15 V15 L12 18 H1Z' fill='#f2f2f2' stroke='#444' stroke-width='1'/><path d='M4 5 V18 M8 3 V17 M12 2 V16' stroke='#444' stroke-width='0.9'/></svg>
<svg style='left:1918px;top:245px;' width='19' height='16' viewBox='0 0 19 16'><path d='M1 2 H6 L8 4 H15 V15 H1Z' fill='#e8e8e8' stroke='#444' stroke-width='1'/><path d='M1 15 L5 7 H19 L15 15Z' fill='#f7f7f7' stroke='#444' stroke-width='1'/></svg>
<svg style='left:1918px;top:270px;' width='18' height='16' viewBox='0 0 18 16'><rect x='0.5' y='0.5' width='17' height='15' fill='#fff' stroke='#555'/><path d='M3 4H9M6 4V11M3 11H10' stroke='#e0a800' stroke-width='2.2'/><rect x='12' y='3' width='4' height='3' fill='#e0a800'/><rect x='13' y='8' width='3' height='6' fill='#ddd' stroke='#666' stroke-width='0.6'/></svg>
<svg style='left:1919px;top:293px;' width='17' height='17' viewBox='0 0 17 17'><circle cx='8.5' cy='8.5' r='8' fill='#3aa0dd'/><path d='M8.5 8.5 L8.5 0.5 A8 8 0 0 1 16.5 8.5Z' fill='#e74c3c'/><path d='M8.5 8.5 L16.5 8.5 A8 8 0 0 1 3 14.5Z' fill='#f1c40f'/><path d='M8.5 8.5 L3 14.5 A8 8 0 0 1 0.5 8.5Z' fill='#4caf50'/></svg>
<svg style='left:1918px;top:317px;' width='18' height='18' viewBox='0 0 18 18'><rect x='0.5' y='0.5' width='17' height='17' fill='#fff' stroke='#2b5f8a'/><rect x='0.5' y='0.5' width='17' height='3' fill='#2b78b3'/><rect x='2.5' y='6' width='3' height='2.5' fill='#2b78b3'/><rect x='2.5' y='10' width='3' height='2.5' fill='#2b78b3'/><rect x='2.5' y='14' width='3' height='2.5' fill='#2b78b3'/><path d='M7 7.2H15M7 11.2H15M7 15.2H15' stroke='#444'/></svg>
<svg style='left:255px;top:920px;' width='62' height='60' viewBox='0 0 62 60'><path d='M30.7 37 L30.7 20' stroke='#2a7a2a' stroke-width='3.2'/><path d='M26 22 L30.7 13.5 L35.4 22 L30.7 20.5Z' fill='#2f9a35' stroke='#1f6a22' stroke-width='0.6'/><path d='M30.7 37 L15 45.5' stroke='#2525c8' stroke-width='3.6'/><path d='M10.3 50.5 L13 42 L19.5 46.5 L15.5 46.5Z' fill='#3a3ae6' stroke='#2020a0' stroke-width='0.6'/><path d='M30.7 37 L46 45.5' stroke='#b02020' stroke-width='3.6'/><path d='M51.5 50.5 L42 47 L48 42 L47 45.5Z' fill='#d83434' stroke='#901818' stroke-width='0.6'/><path d='M27.5 4 L30.7 8 L34 4 M30.7 8 V12.5' fill='none' stroke='#3a9a3a' stroke-width='1.2'/><path d='M4 47.5 H9 L4 55.5 H9.5' fill='none' stroke='#2d2dd0' stroke-width='1.3'/><path d='M52.5 47.5 L57.5 55.5 M57.5 47.5 L52.5 55.5' stroke='#e04040' stroke-width='1.2'/></svg>
<div class=t style='left:256.5px;top:1000.50px;font-size:13px;color:#111;font-weight:700;transform:scaleX(1.04);'>*Isometric</div>
<div class=a style='left:0px;top:118px;width:245px;height:898px;background:#f7f7f7;'></div>
<div class=a style='left:0px;top:191px;width:1px;height:825px;background:#b5b5b5;'></div>
<div class=a style='left:244.5px;top:118px;width:2px;height:898px;background:#a8a8a8;'></div>
<div class=a style='left:64px;top:118px;width:57px;height:22px;background:#d6d6d6;border:1px solid #a9a9a9;border-bottom:none'></div>
<div class=a style='left:120px;top:118px;width:62px;height:22px;background:#d6d6d6;border:1px solid #a9a9a9;border-bottom:none'></div>
<div class=t style='left:8.6px;top:122.84px;font-size:12px;color:#222;transform:scaleX(1.02);'>Features</div>
<div class=t style='left:75.0px;top:122.84px;font-size:12px;color:#222;transform:scaleX(0.943);'>Sketch</div>
<div class=t style='left:129.4px;top:122.84px;font-size:12px;color:#222;transform:scaleX(0.953);'>Evaluate</div>
<div class=a style='left:0px;top:140px;width:243px;height:2px;background:#9ea6a6;'></div>
<div class=a style='left:0px;top:144px;width:243px;height:1.5px;background:#dadada;'></div>
<svg style='left:118px;top:149px;' width='7' height='7' viewBox='0 0 7 7'><circle cx='3.5' cy='3.5' r='2.5' fill='none' stroke='#a0a0a0' stroke-width='1.2'/></svg>
<div class=a style='left:0px;top:159px;width:243px;height:1px;background:#e2e2e2;'></div>
<div class=a style='left:2px;top:165px;width:202px;height:1px;background:#b8b8b8;'></div>
<div class=a style='left:42px;top:165px;width:41.400000000000006px;height:26px;background:#d9d9d9;border:1px solid #b0b0b0'></div>
<div class=a style='left:82.4px;top:165px;width:41.39999999999999px;height:26px;background:#d9d9d9;border:1px solid #b0b0b0'></div>
<div class=a style='left:122.8px;top:165px;width:41.39999999999999px;height:26px;background:#d9d9d9;border:1px solid #b0b0b0'></div>
<div class=a style='left:163.2px;top:165px;width:41.80000000000001px;height:26px;background:#d9d9d9;border:1px solid #b0b0b0'></div>
<div class=a style='left:0px;top:190px;width:243px;height:1px;background:#b8b8b8;'></div>
<svg style='left:14px;top:168px;' width='19' height='19' viewBox='0 0 19 19'><path d='M2 7 L7 4 L11 6 V9.5 L16.5 12 V15.5 L10 18.5 L2 14.5 Z' fill='#f3c623' stroke='#6e5200' stroke-width='1.1' stroke-linejoin='round'/><path d='M2 7 L6 9 L11 6 M6 9 V12.5 L10 14.5 L16.5 12 M10 14.5 V18.5' fill='none' stroke='#6e5200' stroke-width='0.9'/><path d='M2.5 7 L7 4.5 L10.5 6.2 L6 8.6Z' fill='#fbe27a'/><path d='M6.5 12.6 L11 10 L16 12.2 L10 14.2Z' fill='#fbe27a'/></svg>
<svg style='left:53px;top:168px;' width='19' height='19' viewBox='0 0 19 19'><rect x='0.7' y='0.7' width='17.6' height='17.6' rx='1' fill='#fff' stroke='#2b5f8a' stroke-width='1.2'/><rect x='1' y='1' width='17' height='2.5' fill='#2b78b3'/><rect x='3' y='6' width='3.5' height='2.5' fill='#2b78b3'/><rect x='3' y='10' width='3.5' height='2.5' fill='#2b78b3'/><rect x='3' y='14' width='3.5' height='2.5' fill='#2b78b3'/><path d='M8 7.2H16M8 11.2H16M8 15.2H16' stroke='#444' stroke-width='1'/></svg>
<svg style='left:95px;top:169px;' width='16' height='18' viewBox='0 0 16 18'><path d='M2 1 V17 M2 3 H5 M2 10 H5 M2 16 H5' stroke='#444' stroke-width='1.2' fill='none'/><rect x='6' y='0.7' width='6' height='5' fill='#fff' stroke='#444'/><rect x='9' y='7.5' width='6' height='5' fill='#fff' stroke='#444'/><rect x='9' y='12.5' width='6' height='5' fill='#fff' stroke='#444'/></svg>
<svg style='left:134px;top:168px;' width='19' height='19' viewBox='0 0 19 19'><circle cx='9.5' cy='9.5' r='6' fill='none' stroke='#222' stroke-width='1.8'/><path d='M9.5 1 V18 M1 9.5 H18' stroke='#222' stroke-width='1.8'/></svg>
<svg style='left:174px;top:168px;' width='19' height='19' viewBox='0 0 19 19'><path d='M9.5 9.5 V1.0 A8.5 8.5 0 0 0 1.0 9.5Z' fill='#4a90d9'/><path d='M9.5 9.5 V1.0 A8.5 8.5 0 0 1 18.0 9.5Z' fill='#e04848'/><path d='M9.5 9.5 H1.0 A8.5 8.5 0 0 0 9.5 18.0Z' fill='#3fae49'/><path d='M9.5 9.5 H18.0 A8.5 8.5 0 0 1 9.5 18.0Z' fill='#f2c531'/><circle cx='9.5' cy='9.5' r='8.5' fill='url(#gloss)'/><path d='M11 3 C14 1.5 18 4 18 8 C16 6 13 5 11 3Z' fill='#111'/></svg>
<svg style='left:229px;top:171px;' width='7' height='12' viewBox='0 0 7 12'><path d='M1 1 L6 6 L1 11' fill='none' stroke='#222' stroke-width='1.6'/></svg>
<div class=a style='left:5px;top:191px;width:235px;height:25px;background:#f7f7f7;border:1px solid #d2d2d2'></div>
<svg style='left:8px;top:195px;' width='18' height='19' viewBox='0 0 18 19'><path d='M1 1.5 H17 L11 9 V17 L7 18 V9 Z' fill='#fff' stroke='#444' stroke-width='1.1'/><path d='M1.5 1.5 H16.5 L15 3.5 H3 Z' fill='#2b78b3'/></svg>
<svg style='left:4px;top:219px;' width='19' height='19' viewBox='0 0 19 19'><path d='M2 7 L7 4 L11 6 V9.5 L16.5 12 V15.5 L10 18.5 L2 14.5 Z' fill='#f3c623' stroke='#6e5200' stroke-width='1.1' stroke-linejoin='round'/><path d='M2 7 L6 9 L11 6 M6 9 V12.5 L10 14.5 L16.5 12 M10 14.5 V18.5' fill='none' stroke='#6e5200' stroke-width='0.9'/><path d='M2.5 7 L7 4.5 L10.5 6.2 L6 8.6Z' fill='#fbe27a'/><path d='M6.5 12.6 L11 10 L16 12.2 L10 14.2Z' fill='#fbe27a'/></svg>
<div class=t style='left:27.2px;top:223.44px;font-size:12px;color:#1e1e1e;transform:scaleX(0.991);clip-path:inset(-4px 0 -4px 0);width:216px'>Golf Ball (Default) &lt;&lt;Default&gt;_Display St</div>
<svg style='left:10px;top:247.2px;' width='5' height='8' viewBox='0 0 5 8'><path d='M0 0 L5 4 L0 8Z' fill='#555'/></svg>
<div class=t style='left:50.6px;top:245.64px;font-size:12px;color:#1e1e1e;transform:scaleX(1.018);'>History</div>
<svg style='left:27px;top:242.2px;' width='20' height='18' viewBox='0 0 20 18'><path d='M1.5 16.5 V2.5 Q1.5 1 3 1 H7 L8.5 2.5 H17 Q18.5 2.5 18.5 4 V16.5 Q18.5 17.5 17 17.5 H3 Q1.5 17.5 1.5 16.5Z' fill='#fbfbfb' stroke='#4a4a4a' stroke-width='1.3'/><path d='M1.5 5 H18.5' stroke='#9a9a9a' stroke-width='1'/><circle cx='11' cy='11' r='4.5' fill='none' stroke='#666' stroke-width='1.2'/><path d='M4 12 C5 8 8 7 10 8' fill='none' stroke='#2b78b3' stroke-width='2'/><path d='M3 10 L5 14 L7 11Z' fill='#2b78b3'/></svg>
<div class=t style='left:50.6px;top:267.82px;font-size:12px;color:#1e1e1e;transform:scaleX(0.92);'>Sensors</div>
<svg style='left:27px;top:264.38px;' width='20' height='18' viewBox='0 0 20 18'><path d='M1.5 16.5 V2.5 Q1.5 1 3 1 H7 L8.5 2.5 H17 Q18.5 2.5 18.5 4 V16.5 Q18.5 17.5 17 17.5 H3 Q1.5 17.5 1.5 16.5Z' fill='#fbfbfb' stroke='#4a4a4a' stroke-width='1.3'/><path d='M1.5 5 H18.5' stroke='#9a9a9a' stroke-width='1'/><circle cx='10' cy='11' r='5' fill='#fff' stroke='#222' stroke-width='1.5'/><path d='M10 11 L14 14' stroke='#d83020' stroke-width='2'/><path d='M10 11 L13 7' stroke='#7ab' stroke-width='1.2'/></svg>
<svg style='left:10px;top:291.56px;' width='5' height='8' viewBox='0 0 5 8'><path d='M0 0 L5 4 L0 8Z' fill='#555'/></svg>
<div class=t style='left:50.6px;top:290.00px;font-size:12px;color:#1e1e1e;transform:scaleX(1.041);'>Annotations</div>
<svg style='left:27px;top:286.56px;' width='20' height='18' viewBox='0 0 20 18'><path d='M1.5 16.5 V2.5 Q1.5 1 3 1 H7 L8.5 2.5 H17 Q18.5 2.5 18.5 4 V16.5 Q18.5 17.5 17 17.5 H3 Q1.5 17.5 1.5 16.5Z' fill='#fbfbfb' stroke='#4a4a4a' stroke-width='1.3'/><path d='M1.5 5 H18.5' stroke='#9a9a9a' stroke-width='1'/><text x='5' y='16' font-family='Liberation Serif' font-size='12' fill='#2b78b3' font-weight='bold'>A</text></svg>
<svg style='left:10px;top:313.74px;' width='5' height='8' viewBox='0 0 5 8'><path d='M0 0 L5 4 L0 8Z' fill='#555'/></svg>
<div class=t style='left:50.6px;top:312.18px;font-size:12px;color:#1e1e1e;transform:scaleX(0.903);'>Solid Bodies(1)</div>
<svg style='left:27px;top:308.74px;' width='20' height='18' viewBox='0 0 20 18'><path d='M1.5 16.5 V2.5 Q1.5 1 3 1 H7 L8.5 2.5 H17 Q18.5 2.5 18.5 4 V16.5 Q18.5 17.5 17 17.5 H3 Q1.5 17.5 1.5 16.5Z' fill='#fbfbfb' stroke='#4a4a4a' stroke-width='1.3'/><path d='M1.5 5 H18.5' stroke='#9a9a9a' stroke-width='1'/><circle cx='10' cy='11' r='4.6' fill='#2f86c0' stroke='#1d4f70' stroke-width='0.9'/><path d='M7.5 9.5 L10 11 L12.5 9.5 M10 11 V14' fill='none' stroke='#bfe3f7' stroke-width='0.9'/></svg>
<div class=t style='left:50.6px;top:334.36px;font-size:12px;color:#1e1e1e;transform:scaleX(1.013);'>Material &lt;not specified&gt;</div>
<svg style='left:26px;top:329.91999999999996px;' width='20' height='20' viewBox='0 0 20 20'><circle cx='3' cy='2.8' r='2' fill='#fff' stroke='#666' stroke-width='1'/><circle cx='3' cy='8.6' r='2' fill='#fff' stroke='#3b8fc8' stroke-width='1.1'/><circle cx='3' cy='14.4' r='2' fill='#f0c020' stroke='#9a7a00' stroke-width='0.8'/><path d='M6.5 2.8H17M6.5 8.6H17M6.5 14.4H10' stroke='#222' stroke-width='1.5'/><g transform='translate(15 15)'><circle r='3.2' fill='#222'/><path d='M0 -4.6V4.6M-4.6 0H4.6M-3.3 -3.3L3.3 3.3M3.3 -3.3L-3.3 3.3' stroke='#222' stroke-width='1.6'/><circle r='1.2' fill='#f7f7f7'/></g></svg>
<div class=t style='left:50.6px;top:356.54px;font-size:12px;color:#1e1e1e;transform:scaleX(0.983);'>Front Plane</div>
<svg style='left:30px;top:353.1px;' width='15' height='19' viewBox='0 0 15 19'><path d='M5.5 3.2 L1 4.8 V18 L5.5 16.4' fill='none' stroke='#444' stroke-width='1.2'/><path d='M8.5 2.2 L13.5 0.6 V13.6 L8.5 15.2' fill='none' stroke='#444' stroke-width='1.2'/><path d='M7 0 V19' stroke='#444' stroke-width='1.2' stroke-dasharray='2.6 1.6'/></svg>
<div class=t style='left:50.6px;top:378.72px;font-size:12px;color:#1e1e1e;transform:scaleX(0.993);'>Top Plane</div>
<svg style='left:30px;top:375.28px;' width='15' height='19' viewBox='0 0 15 19'><path d='M5.5 3.2 L1 4.8 V18 L5.5 16.4' fill='none' stroke='#444' stroke-width='1.2'/><path d='M8.5 2.2 L13.5 0.6 V13.6 L8.5 15.2' fill='none' stroke='#444' stroke-width='1.2'/><path d='M7 0 V19' stroke='#444' stroke-width='1.2' stroke-dasharray='2.6 1.6'/></svg>
<div class=t style='left:50.6px;top:400.90px;font-size:12px;color:#1e1e1e;transform:scaleX(0.983);'>Right Plane</div>
<svg style='left:30px;top:397.46px;' width='15' height='19' viewBox='0 0 15 19'><path d='M5.5 3.2 L1 4.8 V18 L5.5 16.4' fill='none' stroke='#444' stroke-width='1.2'/><path d='M8.5 2.2 L13.5 0.6 V13.6 L8.5 15.2' fill='none' stroke='#444' stroke-width='1.2'/><path d='M7 0 V19' stroke='#444' stroke-width='1.2' stroke-dasharray='2.6 1.6'/></svg>
<div class=t style='left:50.6px;top:423.08px;font-size:12px;color:#1e1e1e;transform:scaleX(1.062);'>Origin</div>
<svg style='left:27px;top:419.64px;' width='19' height='19' viewBox='0 0 19 19'><path d='M3 16 V2 M3 16 H17' stroke='#111' stroke-width='1.5'/><path d='M0.5 4 L3 0 L5.5 4Z M15 13.5 L19 16 L15 18.5Z' fill='#111'/><circle cx='3' cy='16' r='1.8' fill='#111'/></svg>
<svg style='left:9px;top:448.32px;' width='8' height='5' viewBox='0 0 8 5'><path d='M0 0 L8 0 L4 5Z' fill='#555'/></svg>
<div class=t style='left:50.6px;top:445.26px;font-size:12px;color:#1e1e1e;transform:scaleX(0.959);'>Revolve1</div>
<svg style='left:27px;top:441.82px;' width='20' height='20' viewBox='0 0 20 20'><path d='M5.64 6.89 A6.3 6.3 0 1 1 4.88 12.65' fill='none' stroke='#1d4f70' stroke-width='6.6'/><path d='M5.64 6.89 A6.3 6.3 0 1 1 4.88 12.65' fill='none' stroke='url(#gB2)' stroke-width='4.4'/><path d='M3 8.5 L13.5 14' stroke='#111' stroke-width='1.4'/></svg>
<div class=a style='left:48px;top:462px;width:71px;height:22px;background:#a9cbeb;border:1px solid #5b9bd5'></div>
<svg style='left:50px;top:463px;' width='21' height='20' viewBox='0 0 21 20'><path d='M15.5 1.5 H1.5 V12 Q1.5 18 7.5 18 H19.5' fill='none' stroke='#3a3f48' stroke-width='1.3'/></svg>
<div class=t style='left:74.2px;top:467.44px;font-size:12px;color:#1e1e1e;transform:scaleX(0.957);'>Sketch1</div>
<svg style='left:10px;top:491.17999999999995px;' width='5' height='8' viewBox='0 0 5 8'><path d='M0 0 L5 4 L0 8Z' fill='#555'/></svg>
<div class=t style='left:50.6px;top:489.62px;font-size:12px;color:#1e1e1e;transform:scaleX(0.99);'>Cut-Revolve1</div>
<svg style='left:27px;top:486.17999999999995px;' width='20' height='20' viewBox='0 0 20 20'><ellipse cx='10' cy='4' rx='8.5' ry='3' fill='#eee' stroke='#555' stroke-width='1'/><path d='M1.5 4 V15 C1.5 18 5 19 6 19 L10 12 L14 19 C15 19 18.5 18 18.5 15 V4' fill='#eee' stroke='#555' stroke-width='1'/><path d='M5 6 L5 17 L10 11 L15 17 V6 L10 9 Z' fill='#3d8fc4' stroke='#1f5f8b' stroke-width='0.8'/></svg>
<div class=a style='left:1px;top:506px;width:117px;height:3px;background:#2f86c6;'></div>
<div class=a style='left:1px;top:995px;width:244px;height:16px;background:#f0f0f0;'></div>
<div class=a style='left:18px;top:996px;width:180px;height:14px;background:#cdcdcd;'></div>
<svg style='left:6px;top:998px;' width='7' height='10' viewBox='0 0 7 10'><path d='M5.5 1 L1.5 5 L5.5 9' fill='none' stroke='#555' stroke-width='1.5'/></svg>
<svg style='left:232px;top:998px;' width='7' height='10' viewBox='0 0 7 10'><path d='M1.5 1 L5.5 5 L1.5 9' fill='none' stroke='#555' stroke-width='1.5'/></svg>
<div class=a style='left:0px;top:1016px;width:1941px;height:17px;background:#f7f7f7;'></div>
<div class=a style='left:0px;top:1016px;width:1941px;height:1px;background:#a0a0a0;'></div>
<div class=a style='left:0px;top:1032px;width:1941px;height:1px;background:#a8a8a8;'></div>
<div class=a style='left:1939px;top:1016px;width:1px;height:17px;background:#a8a8a8;'></div>
<div class=a style='left:2px;top:1016px;width:66px;height:16px;background:#c9c9c9;'></div>
<div class=a style='left:2px;top:1016px;width:65px;height:2px;background:#3a3a3a;'></div>
<div class=a style='left:17.5px;top:1018px;width:1px;height:14px;background:#e2e2e2;'></div>
<div class=a style='left:33.5px;top:1018px;width:1px;height:14px;background:#e2e2e2;'></div>
<div class=a style='left:49.5px;top:1018px;width:1px;height:14px;background:#e2e2e2;'></div>
<svg style='left:5px;top:1019px;' width='60' height='12' viewBox='0 0 60 12'><path d='M3 1.5V10.5' stroke='#aaa' stroke-width='1.4'/><path d='M11.5 1.5L5 6L11.5 10.5Z M27.5 1.5L21 6L27.5 10.5Z M38 1.5L44.5 6L38 10.5Z M54 1.5L60.5 6L54 10.5Z' fill='#aaa'/><path d='M61 1.5V10.5' stroke='#aaa' stroke-width='1.4'/></svg>
<div class=a style='left:68px;top:1017px;width:57px;height:15px;background:#ffffff;'></div>
<div class=a style='left:124.5px;top:1017px;width:69px;height:15px;background:#dadada;border:1px solid #b5b5b5;border-top:none'></div>
<div class=a style='left:193px;top:1017px;width:110px;height:15px;background:#dadada;border:1px solid #b5b5b5;border-top:none;border-left:none'></div>
<div class=t style='left:80.2px;top:1017.24px;font-size:12px;color:#111;font-weight:700;'>Model</div>
<div class=t style='left:135.0px;top:1017.24px;font-size:12px;color:#222;transform:scaleX(0.943);'>3D Views</div>
<div class=t style='left:202.6px;top:1017.24px;font-size:12px;color:#222;transform:scaleX(1.029);'>Motion Study 1</div>
<div class=a style='left:0px;top:1033px;width:1941px;height:18px;background:#f7f7f7;'></div>
<div class=a style='left:0px;top:1051px;width:1941px;height:1px;background:#1a1a1a;'></div>
<div class=t style='left:1.0px;top:1036.24px;font-size:12px;color:#111;transform:scaleX(0.973);'>Shows the selected sketch.</div>
<div class=a style='left:1737px;top:1034px;width:1px;height:17px;background:#cfcfcf;'></div>
<svg style='left:1743px;top:1034px;' width='17' height='15' viewBox='0 0 17 15'><path d='M1 9 L5 1 L9 9Z' fill='#f3c20f' stroke='#7a5a00' stroke-width='0.8'/><path d='M5 4V7' stroke='#222' stroke-width='1'/><path d='M7 8 C10 7 12 5 13 2' fill='none' stroke='#111' stroke-width='1.5'/><path d='M11 2 L15 0.5 L14 4.5Z' fill='#111'/><rect x='1' y='12' width='2.5' height='2.5' fill='#2b5f8a'/><rect x='5' y='12' width='2.5' height='2.5' fill='#2b5f8a'/><rect x='9' y='10.5' width='2.5' height='4' fill='#2b5f8a'/><rect x='13' y='8' width='2.5' height='6.5' fill='#2b5f8a'/></svg>
<div class=t style='left:1834.6px;top:1036.04px;font-size:12px;color:#222;transform:scaleX(0.964);'>MMGS</div>
<svg style='left:1888px;top:1040px;' width='7' height='4' viewBox='0 0 7 4'><path d='M0 4 L3.5 0 L7 4Z' fill='#333'/></svg>
<svg style='left:1921px;top:1035px;' width='17' height='15' viewBox='0 0 17 15'><path d='M1 7 L9 1 L16 5 V9 L8 14 L1 10 Z' fill='#eee' stroke='#555' stroke-width='1'/><path d='M1 7 L8 11 L16 5 M8 11 V14' fill='none' stroke='#555' stroke-width='0.9'/><circle cx='9' cy='5.5' r='2' fill='none' stroke='#555' stroke-width='0.9'/></svg>
<div class=a style='left:121px;top:400px;width:194px;height:68px;background:rgba(0,0,0,0.18);filter:blur(1.5px)'></div>
<div class=a style='left:118.6px;top:397px;width:194.5px;height:68.5px;background:#f7f7f7;border:1px solid #a6a6a6'></div>
<svg style='left:127px;top:405px;' width='22' height='20' viewBox='0 0 22 20'><rect x='1' y='2' width='13' height='13' fill='#eef6fc' stroke='#2b78b3' stroke-width='1.3'/><path d='M1 6.5H14M5.5 2V15' stroke='#b8cfe0' stroke-width='0.9'/><path d='M14.5 1 V5 M12.5 3 H16.5' stroke='#aaa' stroke-width='0.8'/><path d='M7 17.5 L16.5 6.5 L19.5 9 L10 20Z' fill='#f2c84b' stroke='#444' stroke-width='0.8'/><path d='M16.5 6.5 L19.5 9 L20.8 7.3 L18 4.8Z' fill='#c8433a' stroke='#444' stroke-width='0.6'/></svg>
<svg style='left:158px;top:406px;' width='22' height='20' viewBox='0 0 22 20'><path d='M1.5 5 L6.5 2.5 V15 L1.5 17.5Z' fill='#5aaad8' stroke='#1d4f70' stroke-width='0.9'/><path d='M6.5 2.5 L12 4.5 V17 L6.5 15' fill='#8cc8ea' stroke='#1d4f70' stroke-width='0.9'/><path d='M6.5 1 V18' stroke='#333' stroke-width='0.8' stroke-dasharray='1.5 1'/><path d='M9 17.5 L17.5 7.5 L20.5 10 L12 20Z' fill='#f2c84b' stroke='#444' stroke-width='0.8'/><path d='M17.5 7.5 L20.5 10 L21.8 8.3 L19 5.8Z' fill='#c8433a' stroke='#444' stroke-width='0.6'/></svg>
<svg style='left:189px;top:406px;' width='20' height='20' viewBox='0 0 20 20'><path d='M4.5 2.5 V16' stroke='#111' stroke-width='1.7'/><path d='M1.5 13 L4.5 18.5 L7.5 13Z' fill='#111'/><path d='M10 3.5 L14 1.5 L18 3.5 V8.5 L14 10.5 L10 8.5Z' fill='#5aaad8' stroke='#1d4f70' stroke-width='0.9'/><path d='M10 3.5 L14 5.5 L18 3.5 M14 5.5 V10.5' fill='none' stroke='#1d4f70' stroke-width='0.7'/><path d='M10 13.5 L14 11.5 L18 13.5 V17.5 L14 19.5 L10 17.5Z' fill='#f7f7f7' stroke='#d0d0d0' stroke-width='0.9'/></svg>
<svg style='left:221px;top:409px;' width='15' height='14' viewBox='0 0 15 14'><path d='M12.5 13.5 V6 H5' fill='none' stroke='#111' stroke-width='2.2'/><path d='M0.5 6 L6 1.5 V10.5Z' fill='#111'/></svg>
<svg style='left:165px;top:437px;' width='13' height='13' viewBox='0 0 13 13'><circle cx='6.5' cy='6.5' r='5.5' fill='#f7f7f7' stroke='#333' stroke-width='1.4'/><path d='M3.8 5.3H9.2M3.8 8H9.2' stroke='#111' stroke-width='1.5'/></svg>
<svg style='left:189px;top:437px;' width='20' height='20' viewBox='0 0 20 20'><path d='M1 15 L11 11 L19.5 14.5 L9.5 19Z' fill='#6fb8e4' stroke='#1d4f70' stroke-width='1'/><path d='M10 15 V3' stroke='#111' stroke-width='1.7'/><path d='M7 5.5 L10 0.8 L13 5.5Z' fill='#111'/></svg>
<svg style='left:96px;top:478px;' width='14' height='20' viewBox='0 0 14 20'><path d='M1 1 L1 15 L4.5 11.5 L7.5 18 L10 17 L7 10.5 L12 10.5 Z' fill='#fff' stroke='#222' stroke-width='1' stroke-linejoin='round'/></svg>
<div class=a style='left:121.5px;top:479.5px;width:195px;height:351px;background:rgba(0,0,0,0.22);filter:blur(1.8px)'></div>
<div class=a style='left:118.5px;top:476.5px;width:194.5px;height:350.5px;background:#f7f7f7;border:1px solid #8f8f8f'></div>
<div class=t style='left:122.9px;top:485.44px;font-size:12px;color:#111;font-weight:700;'>Feature (Sketch1)</div>
<div class=a style='left:119.6px;top:503px;width:192.5px;height:1px;background:#d4d4d4;'></div>
<div class=t style='left:152.8px;top:510.14px;font-size:12px;color:#1e1e1e;transform:scaleX(0.96);'>M<u style='text-decoration-thickness:1px;text-underline-offset:1.5px'>a</u>ke Reference Sketch</div>
<div class=t style='left:152.8px;top:534.34px;font-size:12px;color:#1e1e1e;transform:scaleX(1.057);'>Comment</div>
<div class=t style='left:152.8px;top:558.64px;font-size:12px;color:#1e1e1e;transform:scaleX(1.013);'><u style='text-decoration-thickness:1px;text-underline-offset:1.5px'>P</u>arent/Child...</div>
<div class=t style='left:152.8px;top:582.94px;font-size:12px;color:#1e1e1e;'>Co<u style='text-decoration-thickness:1px;text-underline-offset:1.5px'>n</u>figure Feature</div>
<div class=t style='left:152.8px;top:607.14px;font-size:12px;color:#1e1e1e;'>Add <u style='text-decoration-thickness:1px;text-underline-offset:1.5px'>t</u>o Favorites</div>
<div class=t style='left:152.8px;top:631.54px;font-size:12px;color:#1e1e1e;transform:scaleX(0.949);'>Save Selection</div>
<div class=t style='left:152.8px;top:655.84px;font-size:12px;color:#1e1e1e;'>S<u style='text-decoration-thickness:1px;text-underline-offset:1.5px'>k</u>etch Color</div>
<div class=t style='left:152.8px;top:680.14px;font-size:12px;color:#1e1e1e;transform:scaleX(0.964);'><u style='text-decoration-thickness:1px;text-underline-offset:1.5px'>F</u>eature Properties...</div>
<div class=t style='left:152.8px;top:706.54px;font-size:12px;color:#1e1e1e;transform:scaleX(0.957);'><u style='text-decoration-thickness:1px;text-underline-offset:1.5px'>G</u>o To...</div>
<div class=t style='left:152.8px;top:730.74px;font-size:12px;color:#1e1e1e;transform:scaleX(0.983);'>Co<u style='text-decoration-thickness:1px;text-underline-offset:1.5px'>l</u>lapse Items</div>
<div class=t style='left:152.8px;top:755.04px;font-size:12px;color:#1e1e1e;transform:scaleX(0.986);'>Rename tree item</div>
<div class=t style='left:152.8px;top:779.34px;font-size:12px;color:#1e1e1e;transform:scaleX(0.98);'><u style='text-decoration-thickness:1px;text-underline-offset:1.5px'>H</u>ide/Show Tree Items...</div>
<svg style='left:297px;top:536.7px;' width='5' height='7' viewBox='0 0 5 7'><path d='M0 0 L4.5 3.5 L0 7Z' fill='#333'/></svg>
<svg style='left:297px;top:633.9px;' width='5' height='7' viewBox='0 0 5 7'><path d='M0 0 L4.5 3.5 L0 7Z' fill='#333'/></svg>
<div class=a style='left:150.6px;top:699px;width:161px;height:1.5px;background:#d0d0d0;'></div>
<div class=a style='left:150.6px;top:798px;width:161px;height:1.5px;background:#d0d0d0;'></div>
<svg style='left:214px;top:810px;' width='8' height='10' viewBox='0 0 8 10'><path d='M1 1 L4 4 L7 1 M1 5.5 L4 8.5 L7 5.5' fill='none' stroke='#333' stroke-width='1.4'/></svg>
<svg style='left:126px;top:580px;' width='19' height='18' viewBox='0 0 19 18'><path d='M2 1V18' stroke='#333' stroke-width='1.1'/><rect x='3' y='1' width='6' height='5' fill='#3d8fc4' stroke='#1f5f8b' stroke-width='0.8'/><path d='M6 16 L15 5 L18 7.5 L9 18Z' fill='#f0c040' stroke='#555' stroke-width='0.8'/><path d='M15 5 L18 7.5 L19 5.5 L16.5 3.5Z' fill='#d94c3a'/></svg>
<svg style='left:126px;top:604px;' width='19' height='17' viewBox='0 0 19 17'><path d='M1.5 15.5 V2.5 Q1.5 1 3 1 H7 L8.5 2.5 H17 Q18.5 2.5 18.5 4 V15.5 Q18.5 16.5 17 16.5 H3 Q1.5 16.5 1.5 15.5Z' fill='#fbfbfb' stroke='#4a4a4a' stroke-width='1.2'/><path d='M10 6 L11.3 9 L14.5 9.2 L12 11.3 L12.8 14.5 L10 12.8 L7.2 14.5 L8 11.3 L5.5 9.2 L8.7 9Z' fill='#2b78b3'/></svg>
<svg style='left:126px;top:652px;' width='19' height='18' viewBox='0 0 19 18'><path d='M1 3 H13 M1 3 V17 H16 V10' fill='none' stroke='#2b78b3' stroke-width='1.5'/><path d='M4 16 L15 3 L18 5.5 L7 17.5Z' fill='#6aaedc' stroke='#1f5f8b' stroke-width='0.9'/></svg>
<svg style='left:126px;top:677px;' width='19' height='18' viewBox='0 0 19 18'><rect x='0.7' y='0.7' width='17.6' height='16.6' fill='#fff' stroke='#2b5f8a' stroke-width='1.2'/><rect x='1' y='1' width='17' height='2.5' fill='#2b78b3'/><rect x='3' y='5.5' width='3.5' height='2.5' fill='#2b78b3'/><rect x='3' y='9.5' width='3.5' height='2.5' fill='#2b78b3'/><rect x='3' y='13.5' width='3.5' height='2.5' fill='#2b78b3'/><path d='M8 6.8H16M8 10.8H16M8 14.8H16' stroke='#444' stroke-width='1'/></svg>
<div class=a style='left:111.3px;top:418px;width:55.2px;height:57.2px;background:transparent;border:9px solid #f7902b'></div>
<div class=a style='left:120.3px;top:427px;width:37.6px;height:38.2px;background:#ffffff;'></div>
<div class=a style='left:122px;top:431px;width:30.6px;height:30.6px;background:#f7f7f7;border:1px solid #b8b8b8'></div>
<svg style='left:128px;top:439px;' width='20' height='15' viewBox='0 0 20 15'><path d='M1 7.5 C5 1.5 15 1.5 19 7.5' fill='none' stroke='#222' stroke-width='1.4'/><path d='M1 7.5 C5 13.5 15 13.5 19 7.5' fill='none' stroke='#888' stroke-width='1.3'/><circle cx='10' cy='7' r='4' fill='#111'/><circle cx='11.3' cy='5.6' r='1.3' fill='#fff'/></svg>
<div class=a style='left:150px;top:477.5px;width:41.2px;height:18.6px;background:rgba(0,0,0,0.25);filter:blur(1.2px)'></div>
<div class=a style='left:148.3px;top:475.3px;width:41.2px;height:18.5px;background:#ffffff;border:1px solid #9a9a9a'></div>
<div class=t style='left:154.0px;top:478.64px;font-size:12px;color:#6a6a6a;transform:scaleX(0.953);'>Show</div>
</body></html>
